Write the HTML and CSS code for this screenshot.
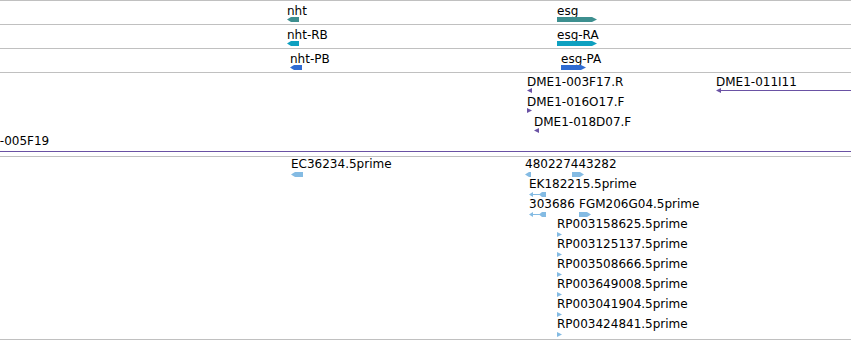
FILE: index.html
```html
<!DOCTYPE html>
<html lang="en">
<head>
    <meta charset="UTF-8">
    <meta name="viewport" content="width=device-width, initial-scale=1">
    <title>Track view</title>
    <link rel="stylesheet" href="styles.css">
</head>
<body>
    <div class="tracks">
        <!-- genes -->
        <div class="track track-gene">
            <div class="feat" style="left: 287px; top: 4px;">
                <span class="label">nht</span>
                <svg class="glyph c-gene" width="12" height="5"><polygon points="0,2.5 4,0 12,0 12,5 4,5"/></svg>
            </div>
            <div class="feat" style="left: 557px; top: 4px;">
                <span class="label">esg</span>
                <svg class="glyph c-gene" width="40" height="5"><polygon points="0,0 35,0 40,2.5 35,5 0,5"/></svg>
            </div>
        </div>

        <!-- transcripts -->
        <div class="track track-gene">
            <div class="feat" style="left: 287px; top: 4px;">
                <span class="label">nht-RB</span>
                <svg class="glyph c-rna" width="12" height="5"><polygon points="0,2.5 4,0 12,0 12,5 4,5"/></svg>
            </div>
            <div class="feat" style="left: 557px; top: 4px;">
                <span class="label">esg-RA</span>
                <svg class="glyph c-rna" width="40" height="5"><polygon points="0,0 35,0 40,2.5 35,5 0,5"/></svg>
            </div>
        </div>

        <!-- proteins -->
        <div class="track track-gene">
            <div class="feat" style="left: 290px; top: 4px;">
                <span class="label">nht-PB</span>
                <svg class="glyph c-prot" width="12" height="5"><polygon points="0,2.5 4,0 12,0 12,5 4,5"/></svg>
            </div>
            <div class="feat" style="left: 561px; top: 4px;">
                <span class="label">esg-PA</span>
                <svg class="glyph c-prot" width="25" height="5"><polygon points="0,0 20,0 25,2.5 20,5 0,5"/></svg>
            </div>
        </div>

        <!-- BAC ends -->
        <div class="track track-bac">
            <div class="feat" style="left: 527px; top: 3px;">
                <span class="label">DME1-003F17.R</span>
                <svg class="glyph c-bac" width="5" height="5"><polygon points="0,2.5 5,0 5,5"/></svg>
            </div>
            <div class="feat" style="left: 527px; top: 23px;">
                <span class="label">DME1-016O17.F</span>
                <svg class="glyph c-bac" width="5" height="5"><polygon points="0,0 5,2.5 0,5"/></svg>
            </div>
            <div class="feat" style="left: 534px; top: 43px;">
                <span class="label">DME1-018D07.F</span>
                <svg class="glyph c-bac" width="5" height="5"><polygon points="0,2.5 5,0 5,5"/></svg>
            </div>
            <div class="feat" style="left: 716px; top: 3px;">
                <span class="label">DME1-011I11</span>
                <svg class="glyph c-bac" width="200" height="5"><polygon points="0,2.5 5,0 5,5"/><rect x="4" y="2" width="196" height="1"/></svg>
            </div>
            <div class="feat" style="left: -35px; top: 62px;">
                <span class="label">DME1-005F19</span>
                <svg class="glyph glyph-low c-bac" width="1000" height="5"><rect x="0" y="2" width="1000" height="1"/></svg>
            </div>
        </div>

        <!-- ESTs -->
        <div class="track track-est">
            <div class="feat" style="left: 291px; top: 1px;">
                <span class="label">EC36234.5prime</span>
                <svg class="glyph c-est" width="12" height="5"><polygon points="0,2.5 4,0 12,0 12,5 4,5"/></svg>
            </div>
            <div class="feat" style="left: 525px; top: 1px;">
                <span class="label">480227443282</span>
                <svg class="glyph c-est" width="60" height="5"><polygon points="0,2.5 4,0 6,0 6,5 4,5"/><polygon points="47,0 55,0 59,2.5 55,5 47,5"/></svg>
            </div>
            <div class="feat" style="left: 529px; top: 21px;">
                <span class="label">EK182215.5prime</span>
                <svg class="glyph c-est" width="17" height="5"><polygon points="0,2.5 4,0 4,5"/><rect x="3" y="2" width="9" height="1"/><polygon points="10,2.5 13,0 17,0 17,5 13,5"/></svg>
            </div>
            <div class="feat" style="left: 529px; top: 41px;">
                <span class="label">303686</span>
                <svg class="glyph c-est" width="17" height="5"><polygon points="0,2.5 4,0 4,5"/><rect x="3" y="2" width="9" height="1"/><polygon points="10,2.5 13,0 17,0 17,5 13,5"/></svg>
            </div>
            <div class="feat" style="left: 579px; top: 41px;">
                <span class="label">FGM206G04.5prime</span>
                <svg class="glyph c-est" width="12" height="5"><polygon points="0,0 8,0 12,2.5 8,5 0,5"/></svg>
            </div>
            <div class="feat" style="left: 557px; top: 61px;">
                <span class="label">RP003158625.5prime</span>
                <svg class="glyph c-est" width="5" height="5"><polygon points="0,0 5,2.5 0,5"/></svg>
            </div>
            <div class="feat" style="left: 557px; top: 81px;">
                <span class="label">RP003125137.5prime</span>
                <svg class="glyph c-est" width="5" height="5"><polygon points="0,0 5,2.5 0,5"/></svg>
            </div>
            <div class="feat" style="left: 557px; top: 101px;">
                <span class="label">RP003508666.5prime</span>
                <svg class="glyph c-est" width="5" height="5"><polygon points="0,0 5,2.5 0,5"/></svg>
            </div>
            <div class="feat" style="left: 557px; top: 121px;">
                <span class="label">RP003649008.5prime</span>
                <svg class="glyph c-est" width="5" height="5"><polygon points="0,0 5,2.5 0,5"/></svg>
            </div>
            <div class="feat" style="left: 557px; top: 141px;">
                <span class="label">RP003041904.5prime</span>
                <svg class="glyph c-est" width="5" height="5"><polygon points="0,0 5,2.5 0,5"/></svg>
            </div>
            <div class="feat" style="left: 557px; top: 161px;">
                <span class="label">RP003424841.5prime</span>
                <svg class="glyph c-est" width="5" height="5"><polygon points="0,0 5,2.5 0,5"/></svg>
            </div>
        </div>
    </div>
</body>
</html>
```

FILE: styles.css
```css
body {
    margin: 0;
    background-color: white;
    font-family: 'DejaVu Sans', sans-serif;
    font-size: 12px;
    color: black;
}

.tracks {
    width: 851px;
    border-bottom: 1px solid #c0c0c0;
}

.track {
    position: relative;
    overflow: hidden;
    border-top: 1px solid #c0c0c0;
}

.track-gene {
    height: 23px;
}

.track-bac {
    height: 83px;
}

.track-est {
    height: 182px;
}

.feat {
    position: absolute;
    white-space: nowrap;
}

.label {
    display: block;
    line-height: 12px;
}

.glyph {
    display: block;
}

.glyph-low {
    margin-top: 2px;
}

.track-est .glyph {
    margin-top: 2px;
}

.c-gene { fill: #3d8f8f; }
.c-rna  { fill: #0ea0c0; }
.c-prot { fill: #2f6bd2; }
.c-bac  { fill: #6a52a4; }
.c-est  { fill: #84bbe3; }
```
